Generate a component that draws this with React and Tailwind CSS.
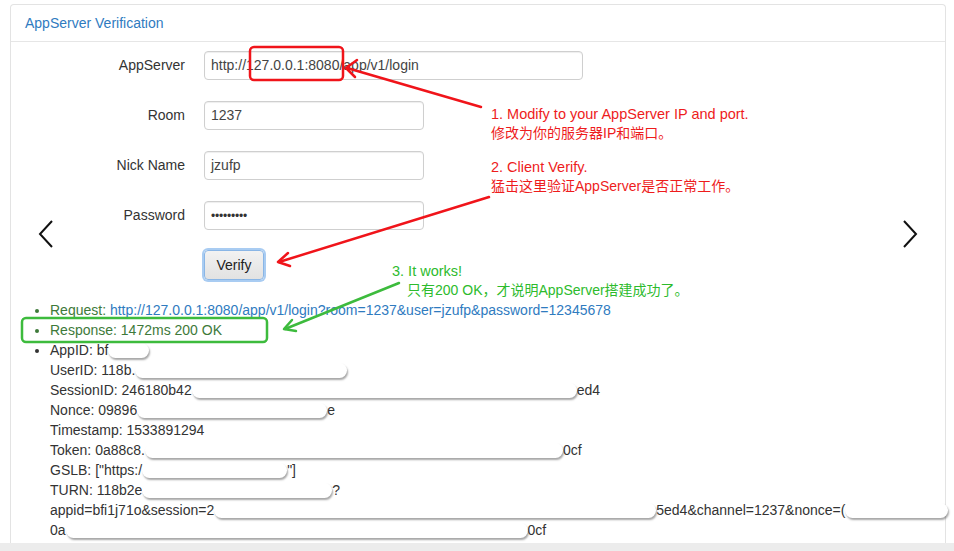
import React from "react";

const Pill = ({ w }) => (
  <span
    className="inline-block h-[15px] rounded-full bg-white align-[-3px] shadow-[1px_2px_2px_rgba(0,0,0,0.35)]"
    style={{ width: w }}
  />
);

const fields = [
  { label: "AppServer", value: "http://127.0.0.1:8080/app/v1/login", width: "w-[379px]" },
  { label: "Room", value: "1237", width: "w-[220px]" },
  { label: "Nick Name", value: "jzufp", width: "w-[220px]" },
  { label: "Password", value: "•••••••••", width: "w-[220px]", secret: true },
];

export default function App() {
  return (
    <div className="relative flex h-[551px] w-[954px] flex-col overflow-hidden bg-white font-['Liberation_Sans','Noto_Sans_CJK_SC',sans-serif] text-[14px] text-[#333]">
      <div className="ml-[10px] mt-[4px] w-[936px] flex-1 rounded-t-[4px] border border-b-0 border-[#e3e3e3]">
        <div className="flex h-[37px] items-center border-b border-[#e6e6e6] px-[14px] text-[14px] text-[#2f7bbf]">
          AppServer Verification
        </div>

        <div className="relative pt-[9px]">
          {/* carousel controls */}
          <svg className="absolute left-[27px] top-[178px]" width="16" height="28" viewBox="0 0 16 28">
            <polyline points="14,1 2,14 14,27" fill="none" stroke="#111" strokeWidth="2" />
          </svg>
          <svg className="absolute right-[27px] top-[178px]" width="16" height="28" viewBox="0 0 16 28">
            <polyline points="2,1 14,14 2,27" fill="none" stroke="#111" strokeWidth="2" />
          </svg>

          <div className="flex flex-col gap-[21px]">
            {fields.map((f) => (
              <div key={f.label} className="flex items-center">
                <div className="w-[174px] text-right text-[14px] text-[#333]">{f.label}</div>
                <div
                  className={`ml-[19px] flex h-[29px] items-center rounded-[4px] border border-[#cfcfcf] bg-white px-[6px] shadow-[inset_0_1px_1px_rgba(0,0,0,0.07)] ${f.width} ${
                    f.secret ? "text-[12px] tracking-[-0.2px] text-[#333]" : "text-[14px] text-[#444]"
                  }`}
                >
                  {f.value}
                </div>
              </div>
            ))}
          </div>

          <div className="ml-[193px] mt-[20px]">
            <button className="h-[30px] w-[60px] rounded-[4px] border border-[#8ab6e6] bg-gradient-to-b from-[#f2f2f2] to-[#e2e2e2] text-[14px] text-[#222] shadow-[0_0_0_2px_#a9ccf2]">
              Verify
            </button>
          </div>

          <ul className="mt-[20px] list-disc whitespace-nowrap pl-[39px] text-[14px] leading-[20px] marker:text-[13px]">
            <li className="text-[#3e7a3a]">
              Request:{" "}
              <span className="text-[#2f7bbf]">http://127.0.0.1:8080/app/v1/login?room=1237&amp;user=jzufp&amp;password=12345678</span>
            </li>
            <li className="text-[#3e7a3a]">Response: 1472ms 200 OK</li>
            <li>
              <div>
                AppID: bf
                <Pill w={41} />
              </div>
              <div>
                UserID: 118b.
                <Pill w={212} />
              </div>
              <div>
                SessionID: 246180b42
                <Pill w={385} />
                ed4
              </div>
              <div>
                Nonce: 09896
                <Pill w={190} />
                e
              </div>
              <div>Timestamp: 1533891294</div>
              <div>
                Token: 0a88c8.
                <Pill w={418} />
                0cf
              </div>
              <div>
                GSLB: ["https:/
                <Pill w={145} />
                "]
              </div>
              <div>
                TURN: 118b2e
                <Pill w={190} />
                ?
              </div>
              <div>
                appid=bfi1j71o&amp;session=2
                <Pill w={442} />
                5ed4&amp;channel=1237&amp;nonce=(
                <Pill w={103} />
              </div>
              <div>
                0a
                <Pill w={462} />
                0cf
              </div>
            </li>
          </ul>
        </div>
      </div>
      <div className="h-[8px] bg-[#ececec]" />

      {/* annotation layer */}
      <svg className="pointer-events-none absolute inset-0" width="954" height="551" viewBox="0 0 954 551">
        <g fill="none" strokeLinecap="round" strokeLinejoin="round">
          <rect x="250" y="47" width="93" height="33" rx="4" stroke="#f0141a" strokeWidth="2.5" />
          <line x1="481" y1="107" x2="347" y2="68" stroke="#f0141a" strokeWidth="2.5" />
          <polyline points="357,60 346,68 355,77" stroke="#f0141a" strokeWidth="2.5" />
          <line x1="489" y1="197" x2="279" y2="262" stroke="#f0141a" strokeWidth="2.5" />
          <polyline points="288,253 278,262 290,266" stroke="#f0141a" strokeWidth="2.5" />
          <rect x="22" y="318" width="245" height="24" rx="4" stroke="#3dbb3d" strokeWidth="2.5" />
          <line x1="399" y1="283" x2="285" y2="329" stroke="#3dbb3d" strokeWidth="2.5" />
          <polyline points="292,320 284,329 296,331" stroke="#3dbb3d" strokeWidth="2.5" />
        </g>
      </svg>

      <div className="pointer-events-none absolute left-[491px] top-[105px] text-[#ee1c1c]">
        <div className="text-[14.5px] leading-[19px]">1. Modify to your AppServer IP and port.</div>
        <div className="text-[14px] leading-[19px]">修改为你的服务器IP和端口。</div>
      </div>
      <div className="pointer-events-none absolute left-[491px] top-[158px] text-[#ee1c1c]">
        <div className="text-[14.5px] leading-[19px]">2. Client Verify.</div>
        <div className="text-[14px] leading-[19px]">猛击这里验证AppServer是否正常工作。</div>
      </div>
      <div className="pointer-events-none absolute left-[392px] top-[262px] text-[#2dbb2d]">
        <div className="text-[14.5px] leading-[19px]">3. It works!</div>
        <div className="pl-[15px] text-[14px] leading-[19px]">只有200 OK，才说明AppServer搭建成功了。</div>
      </div>
    </div>
  );
}
